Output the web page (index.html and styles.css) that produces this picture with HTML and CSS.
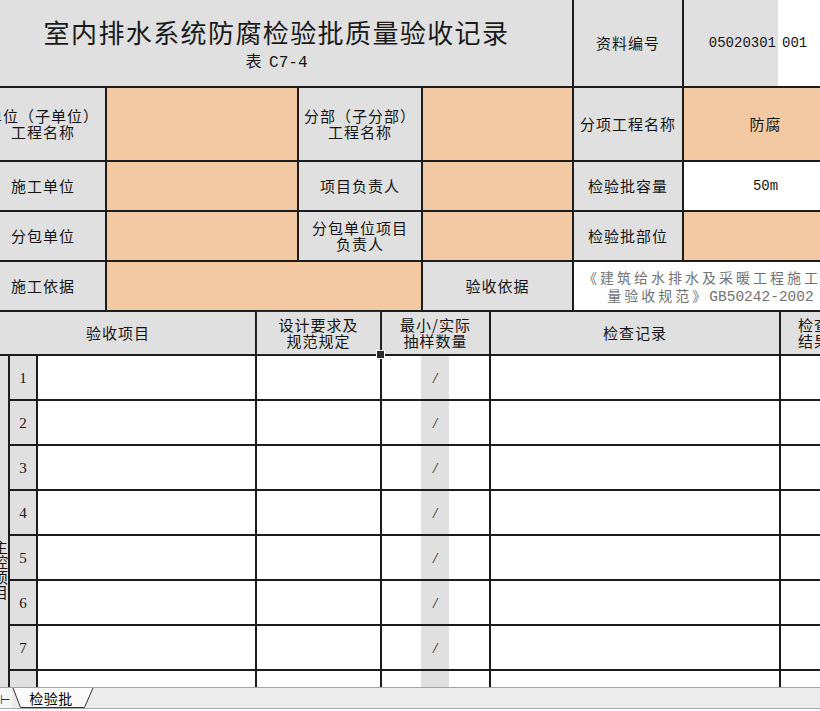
FILE: index.html
```html
<!DOCTYPE html>
<html lang="zh-CN">
<head>
<meta charset="utf-8">
<title>室内排水系统防腐检验批质量验收记录</title>
<link rel="stylesheet" href="styles.css">
</head>
<body>
<div class="app">
  <div class="viewport">
    <div class="sheet">
      <div class="top">
        <div class="c g title-cell">
          <div class="title">室内排水系统防腐检验批质量验收记录</div>
          <div class="subtitle">表 <span class="mono">C7-4</span></div>
        </div>
        <div class="c g">资料编号</div>
        <div class="c code"><span class="code-a">05020301</span><span class="code-b">001</span></div>

        <div class="c g">单位（子单位）<br>工程名称</div>
        <div class="c o"></div>
        <div class="c g">分部（子分部）<br>工程名称</div>
        <div class="c o"></div>
        <div class="c g">分项工程名称</div>
        <div class="c o">防腐</div>

        <div class="c g">施工单位</div>
        <div class="c o"></div>
        <div class="c g">项目负责人</div>
        <div class="c o"></div>
        <div class="c g">检验批容量</div>
        <div class="c"><span class="mono">50m</span></div>

        <div class="c g">分包单位</div>
        <div class="c o"></div>
        <div class="c g">分包单位项目<br>负责人</div>
        <div class="c o"></div>
        <div class="c g">检验批部位</div>
        <div class="c o"></div>

        <div class="c g">施工依据</div>
        <div class="c o span2"></div>
        <div class="c g">验收依据</div>
        <div class="c basis span2"><span class="basis-cjk">《建筑给水排水及采暖工程施工质</span><br><span class="basis-cjk">量验收规范》</span><span class="basis-mono">GB50242-2002</span></div>
      </div>

      <div class="bottom">
        <div class="c g span3">验收项目</div>
        <div class="c g selected">设计要求及<br>规范规定</div>
        <div class="c g">最小/实际<br>抽样数量</div>
        <div class="c g">检查记录</div>
        <div class="c g">检查<br>结果</div>

        <div class="c g vert"><span class="vtext">主控项目</span></div>
        <div class="c g num">1</div><div class="c"></div><div class="c"></div>
        <div class="c split"><span class="s-w"></span><span class="s-g">/</span><span class="s-w2"></span></div>
        <div class="c"></div><div class="c"></div>

        <div class="c g num">2</div><div class="c"></div><div class="c"></div>
        <div class="c split"><span class="s-w"></span><span class="s-g">/</span><span class="s-w2"></span></div>
        <div class="c"></div><div class="c"></div>

        <div class="c g num">3</div><div class="c"></div><div class="c"></div>
        <div class="c split"><span class="s-w"></span><span class="s-g">/</span><span class="s-w2"></span></div>
        <div class="c"></div><div class="c"></div>

        <div class="c g num">4</div><div class="c"></div><div class="c"></div>
        <div class="c split"><span class="s-w"></span><span class="s-g">/</span><span class="s-w2"></span></div>
        <div class="c"></div><div class="c"></div>

        <div class="c g num">5</div><div class="c"></div><div class="c"></div>
        <div class="c split"><span class="s-w"></span><span class="s-g">/</span><span class="s-w2"></span></div>
        <div class="c"></div><div class="c"></div>

        <div class="c g num">6</div><div class="c"></div><div class="c"></div>
        <div class="c split"><span class="s-w"></span><span class="s-g">/</span><span class="s-w2"></span></div>
        <div class="c"></div><div class="c"></div>

        <div class="c g num">7</div><div class="c"></div><div class="c"></div>
        <div class="c split"><span class="s-w"></span><span class="s-g">/</span><span class="s-w2"></span></div>
        <div class="c"></div><div class="c"></div>

        <div class="c g num">8</div><div class="c"></div><div class="c"></div>
        <div class="c split"><span class="s-w"></span><span class="s-g">/</span><span class="s-w2"></span></div>
        <div class="c"></div><div class="c"></div>

        <div class="c g num">9</div><div class="c"></div><div class="c"></div>
        <div class="c split"><span class="s-w"></span><span class="s-g">/</span><span class="s-w2"></span></div>
        <div class="c"></div><div class="c"></div>
      </div>
    </div>
  </div>

  <div class="tabbar">
    <span class="nav">⊣</span>
    <div class="tab">
      <svg class="tab-shape" width="82" height="21" viewBox="0 0 82 21">
        <polygon points="1,0 8.5,19.5 72.5,19.5 81,0" fill="#fbfbfb"/>
        <polyline points="1,0 8.5,19.5 72.5,19.5 81,0" fill="none" stroke="#333" stroke-width="1"/>
      </svg>
      <span class="tab-label">检验批</span>
    </div>
  </div>
</div>
</body>
</html>
```

FILE: styles.css
```css
* { box-sizing: border-box; }

html, body {
  margin: 0;
  padding: 0;
}

body {
  width: 820px;
  height: 711px;
  overflow: hidden;
  background: #ffffff;
  font-family: "Noto Sans CJK SC", "Noto Sans", sans-serif;
  color: #111111;
}

.app {
  height: 711px;
  display: flex;
  flex-direction: column;
}

.viewport {
  flex: 1;
  min-height: 0;
  overflow: hidden;
}

.sheet {
  width: 866px;
  margin-left: -19px;
  display: flex;
  flex-direction: column;
  gap: 2px;
  background: #1c1c1c;
}

.top {
  display: grid;
  grid-template-columns: 124px 190px 122px 149px 108px 163px;
  grid-template-rows: 86px 72px 48px 48px 48px;
  gap: 2px;
}

.bottom {
  display: grid;
  grid-template-columns: 27px 26px 217px 123px 107px 288px 66px;
  grid-template-rows: 42px repeat(9, 43px);
  gap: 2px;
}

.c {
  display: flex;
  align-items: center;
  justify-content: center;
  text-align: center;
  font-size: 15px;
  letter-spacing: 1px;
  line-height: 16px;
  white-space: nowrap;
  background: #ffffff;
  color: #151515;
}

.g { background: #e0e0e0; }
.o { background: #f2c9a3; }

.span2 { grid-column: span 2; }
.span3 { grid-column: span 3; }

.mono {
  font-family: "Liberation Mono", "DejaVu Sans Mono", monospace;
  letter-spacing: 0;
  font-size: 14px;
}

.title-cell {
  grid-column: span 4;
  flex-direction: column;
}

.title {
  font-size: 26px;
  letter-spacing: 1.4px;
  line-height: 36px;
  color: #1a1a1a;
}

.subtitle {
  font-size: 16px;
  line-height: 20px;
  letter-spacing: 0;
}

.subtitle .mono {
  font-size: 16px;
  margin-left: 4px;
}

.code {
  align-items: stretch;
  justify-content: flex-start;
  font-family: "Liberation Mono", "DejaVu Sans Mono", monospace;
  font-size: 14px;
  letter-spacing: 0;
}

.code-a {
  flex: 0 0 94px;
  background: #e0e0e0;
  display: flex;
  align-items: center;
  justify-content: flex-end;
  padding-right: 2px;
}

.code-b {
  flex: 1;
  display: flex;
  align-items: center;
  padding-left: 4px;
}

.basis {
  display: block;
  padding-top: 6px;
  color: #727272;
  line-height: 17px;
}

.basis-cjk {
  font-family: "Noto Sans CJK SC", sans-serif;
  font-size: 14px;
  letter-spacing: 3px;
}

.basis-mono {
  font-family: "Liberation Mono", monospace;
  font-size: 14.5px;
  letter-spacing: 0;
}

.selected {
  position: relative;
  z-index: 1;
  outline: 1px solid #2a2a2a;
}

.selected::after {
  content: "";
  position: absolute;
  right: -5px;
  bottom: -5px;
  width: 7px;
  height: 7px;
  background: #2a2a2a;
  border: 1px solid #ffffff;
}

.vert {
  grid-row: span 9;
  align-items: flex-start;
  justify-content: center;
  padding-left: 11px;
  padding-top: 184px;
  overflow: hidden;
}

.vtext {
  writing-mode: vertical-rl;
  text-orientation: upright;
  font-size: 15px;
  letter-spacing: 0;
  line-height: 16px;
}

.num {
  font-family: "Liberation Serif", "DejaVu Serif", serif;
  font-size: 15px;
  letter-spacing: 0;
}

.split {
  align-items: stretch;
  justify-content: flex-start;
}

.s-w { flex: 0 0 39px; }
.s-w2 { flex: 1; }

.s-g {
  flex: 0 0 28px;
  background: #e0e0e0;
  display: flex;
  align-items: center;
  justify-content: center;
  font-family: "Liberation Serif", serif;
  font-style: italic;
  font-size: 15px;
  letter-spacing: 0;
}

.tabbar {
  flex: 0 0 22px;
  margin-bottom: 2px;
  background: #ececec;
  border-top: 1px solid #a3a3a3;
  border-bottom: 1px solid #a8a8a8;
  display: flex;
  align-items: stretch;
}

.nav {
  width: 12px;
  display: flex;
  align-items: center;
  justify-content: flex-end;
  padding-right: 6px;
  background: #f7f7f7;
  font-size: 12px;
  color: #333;
  overflow: hidden;
  direction: rtl;
}

.tab {
  position: relative;
  width: 82px;
  display: flex;
  align-items: center;
  justify-content: center;
}

.tab-shape {
  position: absolute;
  left: 0;
  top: 0;
}

.tab-label {
  position: relative;
  font-size: 14px;
  color: #000;
  line-height: 18px;
  letter-spacing: 0.5px;
  margin-left: -4px;
}
```
